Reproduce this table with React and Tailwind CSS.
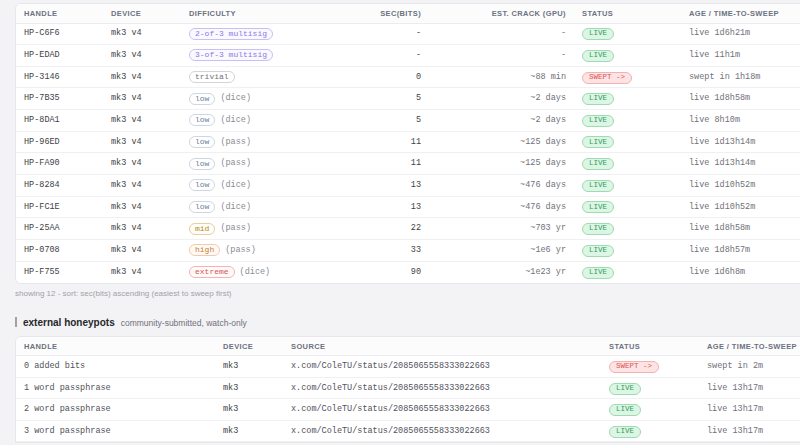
const mono = { fontFamily: '"Liberation Mono", "DejaVu Sans Mono", monospace' };

const honeypots = [
  { handle: "HP-C6F6", diff: "2-of-3 multisig", tone: "multi", note: "", bits: "-", crack: "-", status: "live", age: "live 1d6h21m" },
  { handle: "HP-EDAD", diff: "3-of-3 multisig", tone: "multi", note: "", bits: "-", crack: "-", status: "live", age: "live 11h1m" },
  { handle: "HP-3146", diff: "trivial", tone: "trivial", note: "", bits: "0", crack: "~88 min", status: "swept", age: "swept in 1h18m" },
  { handle: "HP-7B35", diff: "low", tone: "low", note: "(dice)", bits: "5", crack: "~2 days", status: "live", age: "live 1d8h58m" },
  { handle: "HP-8DA1", diff: "low", tone: "low", note: "(dice)", bits: "5", crack: "~2 days", status: "live", age: "live 8h10m" },
  { handle: "HP-96ED", diff: "low", tone: "low", note: "(pass)", bits: "11", crack: "~125 days", status: "live", age: "live 1d13h14m" },
  { handle: "HP-FA90", diff: "low", tone: "low", note: "(pass)", bits: "11", crack: "~125 days", status: "live", age: "live 1d13h14m" },
  { handle: "HP-8284", diff: "low", tone: "low", note: "(dice)", bits: "13", crack: "~476 days", status: "live", age: "live 1d10h52m" },
  { handle: "HP-FC1E", diff: "low", tone: "low", note: "(dice)", bits: "13", crack: "~476 days", status: "live", age: "live 1d10h52m" },
  { handle: "HP-25AA", diff: "mid", tone: "mid", note: "(pass)", bits: "22", crack: "~703 yr", status: "live", age: "live 1d8h58m" },
  { handle: "HP-0708", diff: "high", tone: "high", note: "(pass)", bits: "33", crack: "~1e6 yr", status: "live", age: "live 1d8h57m" },
  { handle: "HP-F755", diff: "extreme", tone: "extreme", note: "(dice)", bits: "90", crack: "~1e23 yr", status: "live", age: "live 1d6h8m" },
];

const external = [
  { handle: "0 added bits", status: "swept", age: "swept in 2m" },
  { handle: "1 word passphrase", status: "live", age: "live 13h17m" },
  { handle: "2 word passphrase", status: "live", age: "live 13h17m" },
  { handle: "3 word passphrase", status: "live", age: "live 13h17m" },
];

const diffTones = {
  multi: "border-[#c9bff5] bg-[#faf9ff] text-[#8a7be0]",
  trivial: "border-[#d4d4d8] bg-white text-[#71717a]",
  low: "border-[#cdd6e3] bg-white text-[#6b7f99]",
  mid: "border-[#e6cf9c] bg-[#fffdf7] text-[#b8862b]",
  high: "border-[#f1cba8] bg-[#fffaf5] text-[#c77a3a]",
  extreme: "border-[#f5b3b3] bg-[#fffafa] text-[#d9534f]",
};

function DiffBadge({ label, tone }) {
  return (
    <span
      className={`inline-flex h-[12px] items-center rounded-full border px-[5px] text-[8px] leading-none ${diffTones[tone]}`}
      style={mono}
    >
      {label}
    </span>
  );
}

function StatusBadge({ status }) {
  const swept = status === "swept";
  return (
    <span
      className={`inline-flex h-[12px] items-center rounded-full border px-[6px] text-[7.5px] leading-none ${
        swept
          ? "border-[#f5b0b0] bg-[#fde4e4] text-[#e05252]"
          : "border-[#9ddcb1] bg-[#dcf5e4] text-[#2f9e58]"
      }`}
      style={mono}
    >
      {swept ? "SWEPT ->" : "LIVE"}
    </span>
  );
}

function Th({ children, right = false }) {
  return (
    <th
      className={`h-[19px] px-2 text-[7.5px] font-semibold uppercase tracking-[0.05em] text-[#6b7280] ${
        right ? "text-right" : "text-left"
      }`}
    >
      {children}
    </th>
  );
}

function HoneypotTable() {
  return (
    <div className="w-[825px] overflow-hidden rounded-md border border-[#e5e7eb] bg-white">
      <table className="w-full table-fixed border-collapse">
        <colgroup>
          <col className="w-[87px]" />
          <col className="w-[78px]" />
          <col className="w-[160px]" />
          <col className="w-[88px]" />
          <col className="w-[145px]" />
          <col className="w-[107px]" />
          <col className="w-[160px]" />
        </colgroup>
        <thead className="bg-[#fcfcfd]">
          <tr className="border-b border-[#ececf0]">
            <Th>Handle</Th>
            <Th>Device</Th>
            <Th>Difficulty</Th>
            <Th right>Sec(bits)</Th>
            <Th right>Est. crack (GPU)</Th>
            <Th>Status</Th>
            <Th>Age / time-to-sweep</Th>
          </tr>
        </thead>
        <tbody className="text-[8.5px]" style={mono}>
          {honeypots.map((h, i) => (
            <tr
              key={h.handle}
              className={`h-[21.67px] ${i < honeypots.length - 1 ? "border-b border-[#f0f0f3]" : ""}`}
            >
              <td className="px-2 text-[#3f3f46]">{h.handle}</td>
              <td className="px-2 text-[#3f3f46]">mk3 v4</td>
              <td className="px-2">
                <span className="flex items-center gap-[5px]">
                  <DiffBadge label={h.diff} tone={h.tone} />
                  {h.note && <span className="text-[#8b8b93]">{h.note}</span>}
                </span>
              </td>
              <td className="px-2 text-right text-[#3f3f46]">{h.bits}</td>
              <td className="px-2 text-right text-[#71717a]">{h.crack}</td>
              <td className="px-2">
                <StatusBadge status={h.status} />
              </td>
              <td className="px-2 text-[#71717a]">{h.age}</td>
            </tr>
          ))}
        </tbody>
      </table>
    </div>
  );
}

function ExternalTable() {
  return (
    <div className="w-[825px] overflow-hidden rounded-t-md border border-[#e5e7eb] bg-white">
      <table className="w-full table-fixed border-collapse">
        <colgroup>
          <col className="w-[199px]" />
          <col className="w-[68px]" />
          <col className="w-[318px]" />
          <col className="w-[98px]" />
          <col className="w-[142px]" />
        </colgroup>
        <thead className="bg-[#fcfcfd]">
          <tr className="border-b border-[#ececf0]">
            <Th>Handle</Th>
            <Th>Device</Th>
            <Th>Source</Th>
            <Th>Status</Th>
            <Th>Age / time-to-sweep</Th>
          </tr>
        </thead>
        <tbody className="text-[8.5px]" style={mono}>
          {external.map((e) => (
            <tr key={e.handle} className="h-[21.5px] border-b border-[#f0f0f3]">
              <td className="px-2 text-[#52525b]">{e.handle}</td>
              <td className="px-2 text-[#3f3f46]">mk3</td>
              <td className="px-2 text-[#52525b]">x.com/ColeTU/status/2085065558333022663</td>
              <td className="px-2">
                <StatusBadge status={e.status} />
              </td>
              <td className="px-2 text-[#71717a]">{e.age}</td>
            </tr>
          ))}
        </tbody>
      </table>
    </div>
  );
}

export default function App() {
  return (
    <div
      className="h-[445px] w-[800px] overflow-hidden bg-[#f3f3f5] pl-[15px] pt-[3px]"
      style={{ fontFamily: '"Liberation Sans", Arial, sans-serif' }}
    >
      <HoneypotTable />
      <p className="mt-[4px] text-[8px] text-[#a1a1aa]">
        showing 12 - sort: sec(bits) ascending (easiest to sweep first)
      </p>
      <div className="mt-[15px] flex items-baseline gap-[6px]">
        <span className="h-[10px] w-[2px] self-center bg-[#a1a1aa]" />
        <h2 className="text-[10px] font-bold text-[#27272a]">external honeypots</h2>
        <span className="text-[8.5px] text-[#71717a]">community-submitted, watch-only</span>
      </div>
      <div className="mt-[6px]">
        <ExternalTable />
      </div>
    </div>
  );
}
